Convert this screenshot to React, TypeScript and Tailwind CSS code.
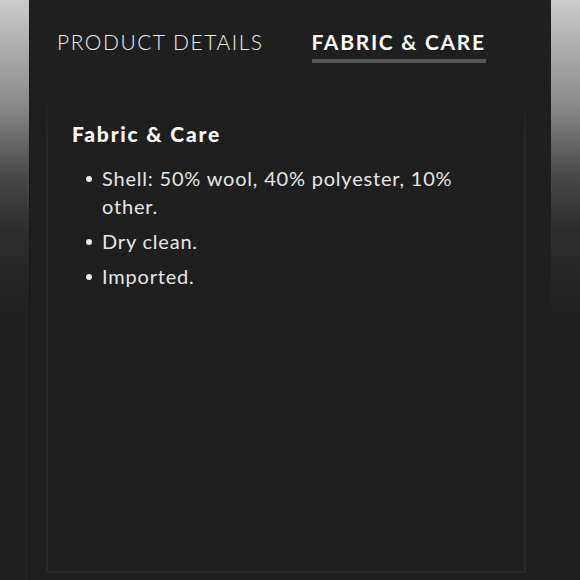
export default function App() {
  const items = ["Shell: 50% wool, 40% polyester, 10% other.", "Dry clean.", "Imported."];
  return (
    <div className="w-[580px] h-[580px] flex bg-[#1f1f1f] overflow-hidden" style={{ fontFamily: "Lato, 'Noto Sans', sans-serif" }}>
      <div className="w-[29px] h-full bg-[linear-gradient(to_bottom,#cbcbcb_0%,#8a8a8a_18%,#4a4a4a_30%,#2c2c2c_40%,#1f1f1f_56%)]" />
      <div className="w-[522px] h-full bg-[#1f1f1f] flex flex-col border-l border-[#181818]">
        <div className="flex items-start pl-[27px] pt-[30px] gap-[48px]">
          <div className="text-[21px] leading-[24px] font-light tracking-[1.5px] text-[#ececec]">PRODUCT DETAILS</div>
          <div className="flex flex-col">
            <div className="text-[21px] leading-[24px] font-bold tracking-[1.7px] text-white">FABRIC &amp; CARE</div>
            <div className="mt-[5px] h-[4px] bg-[#555555]" />
          </div>
        </div>
        <div className="ml-[16px] mr-[25px] mt-[35px] h-[475px] border-x-2 border-b-2 [border-image:linear-gradient(to_bottom,transparent_0,#292929_45px)_1] px-[24px] pt-[23px]">
          <div className="text-[21px] leading-[26px] font-black tracking-[1.8px] text-white">Fabric &amp; Care</div>
          <ul className="mt-[17px] flex flex-col gap-[7px] pl-[14px]">
            {items.map((t) => (
              <li key={t} className="flex text-[20px] leading-[28px] tracking-[0.8px] text-[#e6e6e6]">
                <span className="w-[16px] shrink-0 flex items-start pt-[12px]">
                  <span className="block w-[6px] h-[6px] rounded-full bg-[#e6e6e6]" />
                </span>
                <span className="w-[370px]">{t}</span>
              </li>
            ))}
          </ul>
        </div>
      </div>
      <div className="flex-1 h-full bg-[linear-gradient(to_bottom,#cbcbcb_0%,#8a8a8a_18%,#4a4a4a_30%,#2c2c2c_40%,#1f1f1f_56%)]" />
    </div>
  );
}
